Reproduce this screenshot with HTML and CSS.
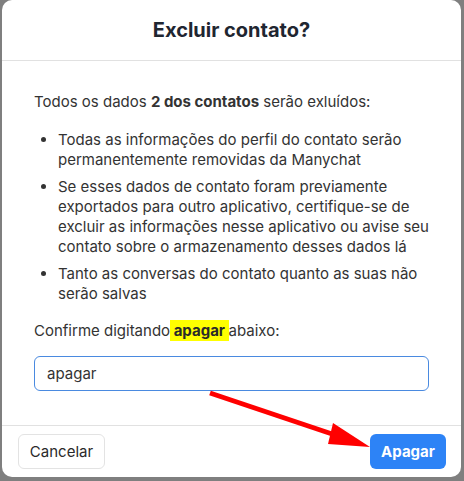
FILE: index.html
```html
<!DOCTYPE html>
<html lang="pt-BR">
<head>
<meta charset="utf-8">
<link rel="stylesheet" href="styles.css">
</head>
<body>
<div class="overlay">
  <div class="modal">
    <div class="modal-header">
      <h2 class="title">Excluir contato?</h2>
    </div>
    <div class="modal-body">
      <p class="intro">Todos os dados <strong>2 dos contatos</strong> serão exluídos:</p>
      <ul class="list">
        <li>Todas as informações do perfil do contato serão permanentemente removidas da Manychat</li>
        <li>Se esses dados de contato foram previamente exportados para outro aplicativo, certifique-se de excluir as informações nesse aplicativo ou avise seu contato sobre o armazenamento desses dados lá</li>
        <li>Tanto as conversas do contato quanto as suas não serão salvas</li>
      </ul>
      <p class="confirm">Confirme digitando<mark class="hl"> apagar </mark>abaixo:</p>
      <div class="input">apagar</div>
    </div>
    <div class="modal-footer">
      <button class="btn btn-secondary">Cancelar</button>
      <button class="btn btn-primary">Apagar</button>
    </div>
    <svg class="arrow" width="180" height="70" viewBox="0 0 180 70">
      <line x1="2" y1="3" x2="136" y2="48" stroke="#ff0000" stroke-width="5"/>
      <polygon points="125,33 120,54 162,57" fill="#ff0000"/>
    </svg>
  </div>
</div>
</body>
</html>
```
FILE: styles.css
```css
* { box-sizing: border-box; }
html, body { margin: 0; padding: 0; }
body {
  width: 464px;
  height: 481px;
  overflow: hidden;
  font-family: Inter, "Noto Sans", sans-serif;
  background: #7f7f7f;
}
.overlay {
  padding: 0 3px 4px 2px;
  height: 481px;
}
.modal {
  position: relative;
  background: #fff;
  border-radius: 10px;
  height: 477px;
  display: flex;
  flex-direction: column;
}
.modal-header {
  height: 61px;
  border-bottom: 1px solid #e1e1e1;
  display: flex;
  align-items: center;
  justify-content: center;
}
.title {
  margin: 0;
  font-size: 20px;
  font-weight: 700;
  color: #1f2631;
}
.modal-body {
  flex: 1;
  padding: 31px 32px 0 32px;
  font-size: 15px;
  line-height: 20px;
  color: #333333;
}
.intro { margin: 0 0 18px; }
.intro strong { font-weight: 700; }
.list {
  margin: 0 0 17px;
  padding-left: 24px;
}
.list li { margin-bottom: 7px; }
.list li:last-child { margin-bottom: 0; }
.confirm { margin: 0 0 15px; }
.hl {
  background: #ffff00;
  color: #2a2a2a;
  font-weight: 700;
  padding: 1px 0;
}
.input {
  height: 35px;
  border: 1px solid #4a8ae0;
  border-radius: 6px;
  padding: 0 12px;
  display: flex;
  align-items: center;
  font-size: 15px;
  color: #333;
}
.modal-footer {
  height: 52px;
  border-top: 1px solid #e1e1e1;
  padding: 8px 15px 8px 16px;
  display: flex;
  justify-content: space-between;
  align-items: center;
}
.btn {
  height: 35px;
  border-radius: 6px;
  font-family: Inter, "Noto Sans", sans-serif;
  font-size: 15px;
  padding: 0;
  cursor: pointer;
}
.btn-secondary {
  background: #fff;
  border: 1px solid #e3e3e3;
  color: #2a2a2a;
  width: 87px;
}
.btn-primary {
  background: #2d83f6;
  border: none;
  color: #fff;
  font-weight: 700;
  width: 76px;
}
.arrow {
  position: absolute;
  left: 206px;
  top: 390px;
}
```
